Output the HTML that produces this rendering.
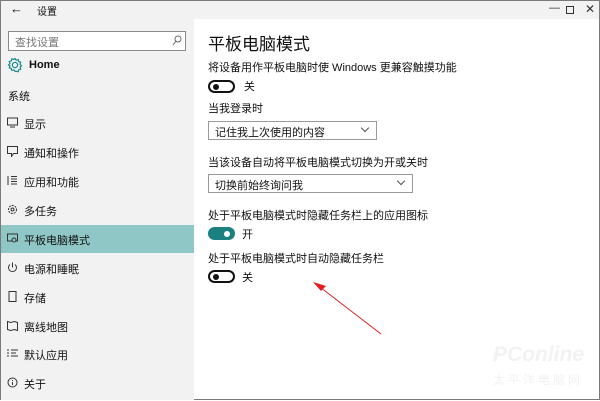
<!DOCTYPE html>
<html><head><meta charset="utf-8"><style>
*{margin:0;padding:0;box-sizing:border-box}
body{width:600px;height:400px;overflow:hidden;font-family:"Liberation Sans","Noto Sans CJK SC",sans-serif;color:#111;background:#fff;position:relative}
.win{position:absolute;left:0;top:0;width:600px;height:400px;border:1px solid #7a7a7a;background:#fff}
.side{position:absolute;left:0;top:0;width:193px;height:399px;background:#f2f2f2}
.top{position:absolute;left:193px;top:0;right:0;height:18px;background:#f2f2f2}
.t{position:absolute;font-size:11px;white-space:nowrap}
.item{position:absolute;left:0;width:193px;height:28px;font-size:11px}
.item span{position:absolute;left:23px;top:7px}
.item svg{position:absolute;left:6px;top:8px}
.dd{position:absolute;border:1px solid #9a9a9a;background:#fff;height:19px;font-size:11px}
.dd span{position:absolute;left:6px;top:2px}
.dd i{position:absolute;right:8px;top:3px;width:6px;height:6px;border-right:1px solid #555;border-bottom:1px solid #555;transform:rotate(45deg)}
.tg{position:absolute;width:27px;height:13px;border-radius:7px;border:2px solid #111}
.tg b{position:absolute;top:2px;width:6px;height:6px;border-radius:50%;background:#111}
</style></head><body>
<div class="win">
<div class="side"></div>
<div class="top"></div>
<div class="t" style="left:9px;top:0px;font-size:13px">&#8592;</div>
<div class="t" style="left:36px;top:2px;font-size:10px">设置</div>
<div class="t" style="left:548px;top:1px;font-size:11px;color:#333">&#8212;</div>
<div style="position:absolute;left:565px;top:5px;width:8px;height:8px;border:1px solid #333"></div>
<div class="t" style="left:584px;top:1px;font-size:12px;color:#333">✕</div>
<div style="position:absolute;left:7px;top:30px;width:178px;height:20px;border:1px solid #8a8a8a;background:#fff"></div>
<div class="t" style="left:14px;top:33px;color:#777">查找设置</div>
<svg style="position:absolute;left:171px;top:34px" width="10" height="12"><circle cx="6" cy="4" r="3" fill="none" stroke="#666"/><line x1="4" y1="6" x2="1" y2="10" stroke="#666"/></svg>
<svg style="position:absolute;left:6px;top:56px" width="16" height="16" viewBox="0 0 16 16"><circle cx="8" cy="8" r="2.6" fill="none" stroke="#1a8a8a" stroke-width="1.3"/><path d="M8 1.5l1.2 1.7 2-.6.5 2 2 .6-.6 2 1.4 1.5-1.4 1.5.6 2-2 .6-.5 2-2-.6L8 14.5l-1.2-1.7-2 .6-.5-2-2-.6.6-2L1.5 8l1.4-1.5-.6-2 2-.6.5-2 2 .6z" fill="none" stroke="#1a8a8a" stroke-width="1.2"/></svg>
<div class="t" style="left:28px;top:58px;font-weight:bold;font-size:11px">Home</div>
<div class="t" style="left:7px;top:87px">系统</div>
<div class="item" style="top:108px"><svg width="11" height="11"><rect x="0.5" y="1" width="10" height="7" fill="none" stroke="#333"/><line x1="3" y1="10" x2="8" y2="10" stroke="#333"/></svg><span>显示</span></div>
<div class="item" style="top:137px"><svg width="11" height="11"><path d="M0.5 0.5h10v7h-4l-2 3v-3h-4z" fill="none" stroke="#333"/></svg><span>通知和操作</span></div>
<div class="item" style="top:166px"><svg width="11" height="11"><path d="M1 1v9M4 1.5h6M4 4h6M4 6.5h6M4 9h6" stroke="#333"/></svg><span>应用和功能</span></div>
<div class="item" style="top:195px"><svg width="11" height="11"><circle cx="5.5" cy="5.5" r="4" fill="none" stroke="#333" stroke-dasharray="2 1"/><circle cx="5.5" cy="5.5" r="1.5" fill="none" stroke="#333"/></svg><span>多任务</span></div>
<div class="item" style="top:224px;background:#8fc6c6"><svg width="11" height="11"><rect x="0.5" y="1" width="10" height="7" fill="none" stroke="#333"/><circle cx="7" cy="7" r="2" fill="#8fc6c6" stroke="#333"/></svg><span>平板电脑模式</span></div>
<div class="item" style="top:253px"><svg width="11" height="11"><path d="M3 2.5a4 4 0 1 0 5 0M5.5 0.5v5" fill="none" stroke="#333"/></svg><span>电源和睡眠</span></div>
<div class="item" style="top:282px"><svg width="11" height="11"><rect x="2" y="0.5" width="7" height="10" fill="none" stroke="#333"/></svg><span>存储</span></div>
<div class="item" style="top:311px"><svg width="11" height="11"><path d="M0.5 1.5l3 1 4-1 3 1v8l-3-1-4 1-3-1z" fill="none" stroke="#333"/></svg><span>离线地图</span></div>
<div class="item" style="top:339px"><svg width="11" height="11"><path d="M0 2h2M0 5h2M0 8h2M4 2h7M4 5h5M4 8h7" stroke="#333"/></svg><span>默认应用</span></div>
<div class="item" style="top:368px"><svg width="11" height="11"><circle cx="5.5" cy="5.5" r="4.5" fill="none" stroke="#333"/><path d="M5.5 3v1M5.5 5v3" stroke="#333"/></svg><span>关于</span></div>

<div class="t" style="left:207px;top:29px;font-size:17px">平板电脑模式</div>
<div class="t" style="left:207px;top:58px">将设备用作平板电脑时使 Windows 更兼容触摸功能</div>
<div class="tg" style="left:207px;top:79px"><b style="left:3px"></b></div>
<div class="t" style="left:243px;top:77px">关</div>
<div class="t" style="left:207px;top:99px">当我登录时</div>
<div class="dd" style="left:207px;top:120px;width:169px"><span>记住我上次使用的内容</span><i></i></div>
<div class="t" style="left:207px;top:153px">当该设备自动将平板电脑模式切换为开或关时</div>
<div class="dd" style="left:207px;top:173px;width:205px"><span>切换前始终询问我</span><i></i></div>
<div class="t" style="left:207px;top:206px">处于平板电脑模式时隐藏任务栏上的应用图标</div>
<div class="tg" style="left:207px;top:226px;background:#1a8080;border-color:#1a8080"><b style="right:3px;background:#fff"></b></div>
<div class="t" style="left:241px;top:225px">开</div>
<div class="t" style="left:207px;top:249px">处于平板电脑模式时自动隐藏任务栏</div>
<div class="tg" style="left:207px;top:269px"><b style="left:3px"></b></div>
<div class="t" style="left:241px;top:268px">关</div>
<svg style="position:absolute;left:0;top:0" width="600" height="400"><line x1="380" y1="333" x2="315" y2="283" stroke="#e02020" stroke-width="1"/><path d="M312 281l13 4-5 5z" fill="#e02020"/></svg>
<div class="t" style="left:492px;top:342px;font-size:21px;font-style:italic;color:#f2f2f2;font-weight:bold">PConline</div>
<div class="t" style="left:492px;top:370px;font-size:12px;color:#f2f2f2;letter-spacing:3px">太平洋电脑网</div>
</div>
</body></html>
